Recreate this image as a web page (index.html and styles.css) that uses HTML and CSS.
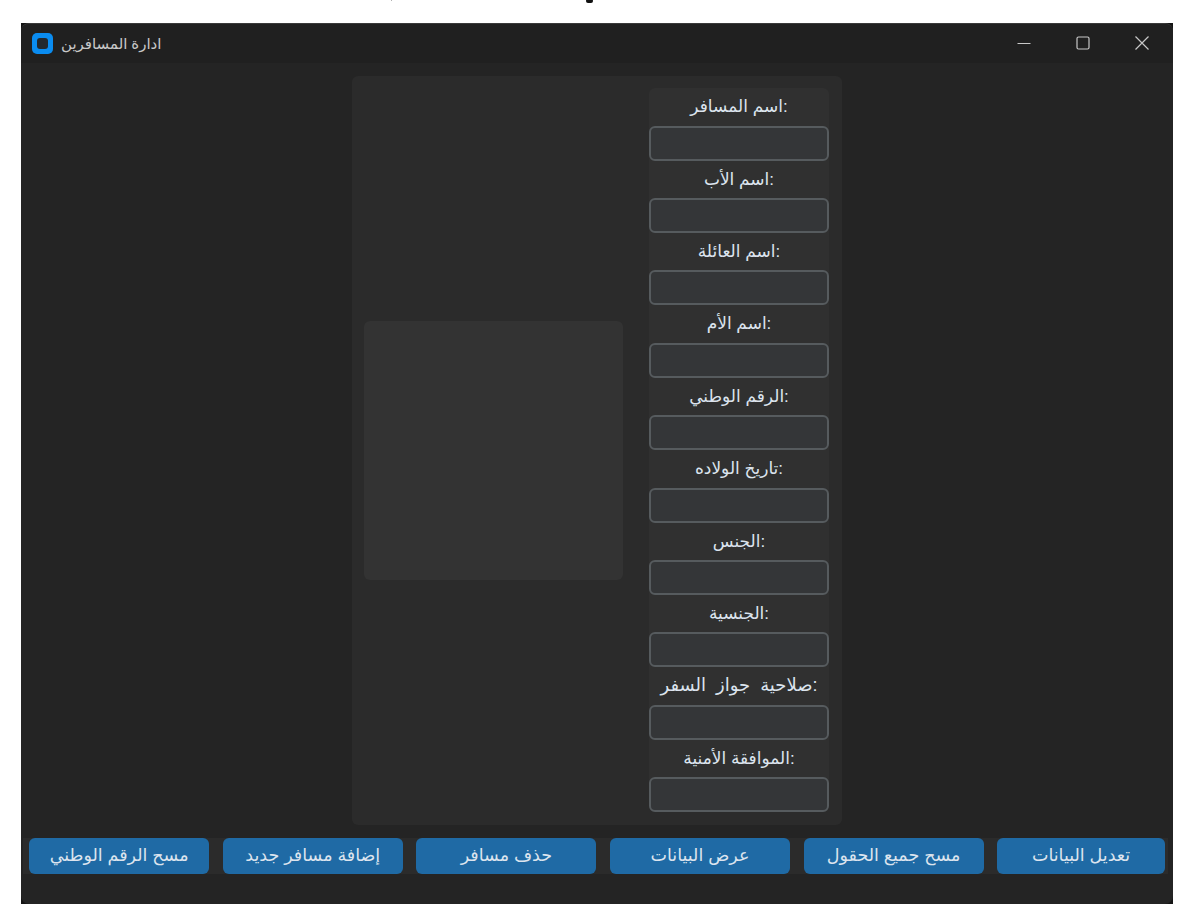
FILE: index.html
```html
<!DOCTYPE html>
<html lang="ar">
<head>
    <meta charset="UTF-8">
    <title>ادارة المسافرين</title>
    <link rel="stylesheet" href="styles.css">
</head>
<body>
    <span class="cut-dot"></span>
    <span class="cut-dot second"></span>
    <div class="window">
        <div class="window-inner">
            <div class="titlebar">
                <svg class="app-icon" width="21" height="21" viewBox="0 0 21 21">
                    <rect width="21" height="21" rx="5" fill="#0a8cf0"/>
                    <rect x="5" y="5" width="11" height="11" rx="3" fill="#23282d"/>
                </svg>
                <span class="app-title">ادارة المسافرين</span>
                <div class="window-btns">
                    <svg width="14" height="14" viewBox="0 0 14 14"><path d="M0.5 7.5h13" stroke="#c8c8c8" stroke-width="1.2" fill="none"/></svg>
                    <svg width="14" height="14" viewBox="0 0 14 14"><rect x="1" y="1" width="12" height="12" rx="1.5" stroke="#c8c8c8" stroke-width="1.2" fill="none"/></svg>
                    <svg width="14" height="14" viewBox="0 0 14 14"><path d="M0.5 0.5l13 13M13.5 0.5l-13 13" stroke="#c8c8c8" stroke-width="1.2" fill="none"/></svg>
                </div>
            </div>

            <div class="content">
                <div class="main-frame">
                    <div class="photo"></div>
                    <div class="fields">
                        <label class="field-label">اسم المسافر:</label>
                        <input class="field-input" type="text">
                        <label class="field-label">اسم الأب:</label>
                        <input class="field-input" type="text">
                        <label class="field-label">اسم العائلة:</label>
                        <input class="field-input" type="text">
                        <label class="field-label">اسم الأم:</label>
                        <input class="field-input" type="text">
                        <label class="field-label">الرقم الوطني:</label>
                        <input class="field-input" type="text">
                        <label class="field-label">تاريخ الولاده:</label>
                        <input class="field-input" type="text">
                        <label class="field-label">الجنس:</label>
                        <input class="field-input" type="text">
                        <label class="field-label">الجنسية:</label>
                        <input class="field-input" type="text">
                        <label class="field-label wide">صلاحية جواز السفر:</label>
                        <input class="field-input" type="text">
                        <label class="field-label">الموافقة الأمنية:</label>
                        <input class="field-input" type="text">
                    </div>
                </div>

                <div class="actions">
                    <button type="button" class="action-btn">مسح الرقم الوطني</button>
                    <button type="button" class="action-btn">إضافة مسافر جديد</button>
                    <button type="button" class="action-btn">حذف مسافر</button>
                    <button type="button" class="action-btn">عرض البيانات</button>
                    <button type="button" class="action-btn">مسح جميع الحقول</button>
                    <button type="button" class="action-btn last">تعديل البيانات</button>
                </div>
            </div>
        </div>
    </div>
</body>
</html>
```

FILE: styles.css
```css
*{
    margin: 0;
    padding: 0;
    box-sizing: border-box;
}
html, body{
    height: 100%;
}
body{
    background-color: #fff;
    padding: 23px 18px 13px 21px;
    overflow: hidden;
    font-family: "Liberation Sans", "DejaVu Sans", sans-serif;
}
/* bits of a cut off line of text above the window */
.cut-dot{
    position: absolute;
    top: -1px;
    left: 586px;
    width: 7px;
    height: 4px;
    background-color: #111;
    border-radius: 2px;
}
.cut-dot.second{
    left: 391px;
    top: 0;
    width: 1px;
    height: 1px;
    background-color: #999;
}
.window{
    height: 881px;
    background-color: #141414;
}
.window-inner{
    height: 100%;
    background-color: #242424;
    border-radius: 8px;
    overflow: hidden;
    display: flex;
    flex-direction: column;
    border-top: 1px solid #3a3a3a;
}
.titlebar{
    height: 39px;
    background-color: #202020;
    display: flex;
    align-items: center;
    padding-left: 11px;
    padding-bottom: 1px;
    flex-shrink: 0;
}
.app-title{
    margin-left: 8px;
    font-size: 15px;
    color: #c8c8c8;
    font-family: "Noto Sans", "DejaVu Sans", sans-serif;
}
.window-btns{
    margin-left: auto;
    display: flex;
    gap: 45px;
    padding-right: 24px;
    padding-bottom: 1px;
}
.content{
    flex: 1;
    display: flex;
    flex-direction: column;
    align-items: center;
    padding-top: 13px;
}
.main-frame{
    width: 490px;
    height: 749px;
    background-color: #2b2b2b;
    border-radius: 6px;
    padding: 13px 13px 13px 12px;
    display: flex;
    align-items: center;
    gap: 26px;
}
.photo{
    width: 259px;
    height: 259px;
    background-color: #333;
    border-radius: 6px;
    flex-shrink: 0;
}
.fields{
    width: 180px;
    display: grid;
    grid-template-rows: repeat(10, 37.4px 35px);
    background-color: #303030;
    border-radius: 6px;
    margin-top: -0.6px;
}
.field-label{
    font-size: 17px;
    color: #dce4ee;
    text-align: center;
    line-height: 37px;
}
.field-label.wide{
    word-spacing: 5px;
    font-size: 18px;
}
.field-input{
    height: 35px;
    width: 100%;
    background-color: #343638;
    border: 2px solid #565b5e;
    border-radius: 6px;
}
.actions{
    margin-top: 13px;
    width: 1145px;
    align-self: flex-start;
    margin-left: 2px;
    height: 36px;
    padding: 0 3px 0 6px;
    background-color: #2b2b2b;
    display: flex;
    gap: 13.4px;
}
.action-btn{
    width: 180.4px;
    height: 36px;
    background-color: #1f6aa5;
    color: #dce4ee;
    border: 0;
    border-radius: 6px;
    font-size: 17.5px;
    line-height: 32px;
    padding-bottom: 2px;
    font-family: "Liberation Sans", "DejaVu Sans", sans-serif;
}
.action-btn.last{
    width: 168px;
}
```
